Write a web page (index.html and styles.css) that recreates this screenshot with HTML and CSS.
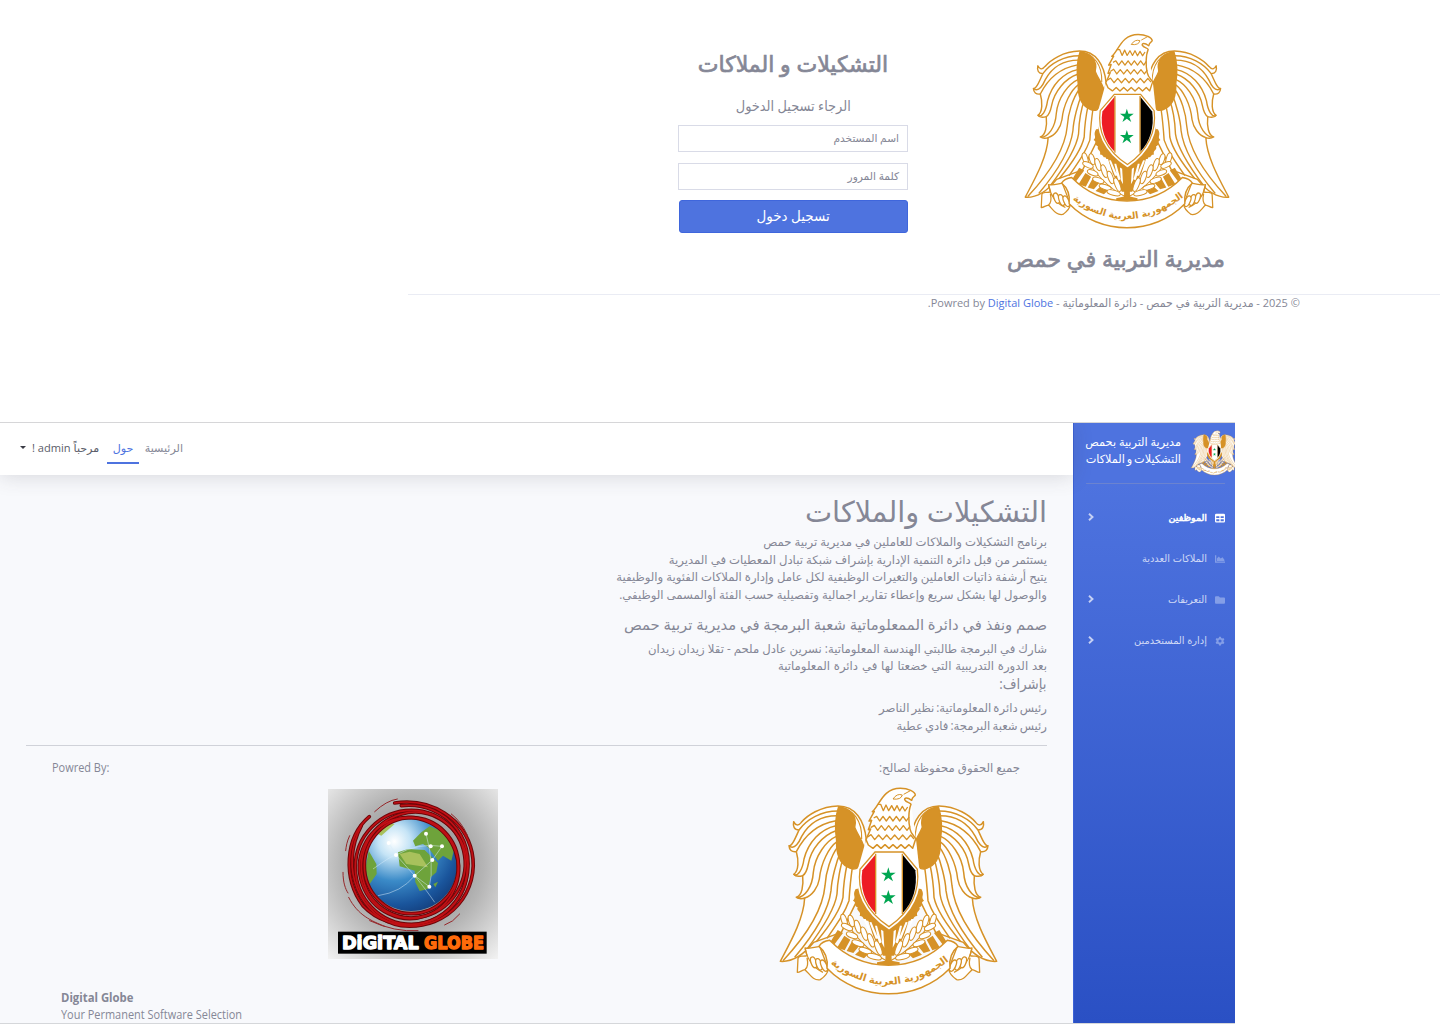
FILE: index.html
```html
<!DOCTYPE html>
<html lang="ar" dir="rtl">
<head>
<meta charset="utf-8">
<title>التشكيلات و الملاكات</title>
<link rel="stylesheet" href="styles.css">
</head>
<body>
<svg class="defs" width="0" height="0" aria-hidden="true">
  <defs>
    <g id="wing" stroke="#d69227" stroke-width="4.5" fill="none" stroke-linejoin="round">
      <path fill="#fff" d="M290 192C284 135 258 91 205 91C152 92 112 120 95 140C86 152 77 149 72 138C69 153 74 163 88 163C76 190 66 214 58 210C59 223 66 230 80 228C87 252 88 286 72 296C78 303 88 303 99 300C102 330 97 360 80 365C88 370 96 370 105 367C102 430 62 500 32 557C75 560 108 530 132 500L215 470L262 375L275 280Z"/>
      <path d="M205 106C155 106 112 130 88 163M202 120C155 120 118 142 96 182C88 200 76 222 60 212M199 135C142 145 104 180 80 228M199 150C152 160 116 200 103 250C98 285 85 300 74 298M199 165C160 178 124 220 116 265C112 285 108 295 99 300M200 182C170 195 136 240 131 290C128 335 105 365 82 366M202 198C178 215 154 260 149 310C145 335 128 360 105 367M205 212C184 240 168 290 166 330C160 400 110 480 40 555M213 228C200 258 186 310 184 345C176 410 130 480 75 545M222 243C212 270 203 320 202 355C196 400 150 470 110 523M233 262C227 290 221 330 220 365C212 405 180 450 140 498M248 275C243 310 240 345 238 375C226 410 205 440 172 488"/>
      <path fill="#d69227" d="M207 93C238 98 264 118 255 155C262 178 290 205 287 248C268 285 250 285 232 273C206 258 200 225 201 195C195 155 198 120 207 93Z"/>
      <path stroke-width="3.5" d="M210 94C250 100 278 135 276 190"/>
    </g>
    <g id="body" fill="#d69227">
      <path d="M258 340C246 360 262 362 250 375C262 380 251 391 264 395C258 406 276 407 270 421C285 420 278 438 296 435L310 480L340 540H358V330Z"/>
      <path d="M204 463L220 472L190 512L178 506ZM224 480L242 492L225 524L202 516ZM247 497L270 509L251 532L231 526ZM278 517L300 532L283 548L256 537Z"/>
      <path d="M281 430l7 0 22 50-8-3zM299 440l6-1 21 50-8 0zM316 450l6 0 14 50-8 4zM334 462l7 4 3 50-7-13z" fill="#fff"/>
    </g>
    <g id="wheat" fill="#fff" stroke="#d69227" stroke-width="3.2">
      <path fill="none" d="M226 430Q268 510 350 555"/>
      <ellipse cx="223" cy="433" rx="8" ry="18" transform="rotate(-18 223 433)"/>
      <ellipse cx="232" cy="454" rx="8" ry="18" transform="rotate(-65 232 454)"/>
      <ellipse cx="245" cy="436" rx="8" ry="18" transform="rotate(-18 245 436)"/>
      <ellipse cx="247" cy="479" rx="8" ry="18" transform="rotate(-68 247 479)"/>
      <ellipse cx="264" cy="453" rx="8" ry="20" transform="rotate(-18 264 453)"/>
      <ellipse cx="265" cy="503" rx="8" ry="19" transform="rotate(-70 265 503)"/>
      <ellipse cx="284" cy="474" rx="8" ry="21" transform="rotate(-20 284 474)"/>
      <ellipse cx="287" cy="525" rx="8" ry="20" transform="rotate(-72 287 525)"/>
      <ellipse cx="304" cy="494" rx="8" ry="21" transform="rotate(-20 304 494)"/>
      <ellipse cx="314" cy="543" rx="8" ry="22" transform="rotate(-75 314 543)"/>
      <ellipse cx="326" cy="517" rx="8" ry="23" transform="rotate(-22 326 517)"/>
    </g>
    <g id="scroll" fill="#fff" stroke="#d69227" stroke-width="4" stroke-linejoin="round">
      <path d="M150 512C130 515 126 520 106 517L112 540C100 545 88 536 85 548L83 590C92 590 96 583 106 582C120 595 130 616 152 612C165 603 174 595 176 580Z"/>
      <path d="M107 520C112 548 130 576 160 590M106 582C116 575 115 560 112 546" fill="none"/>
      <ellipse cx="132" cy="560" rx="8" ry="17" transform="rotate(-20 132 560)"/>
      <ellipse cx="148" cy="566" rx="8" ry="18" transform="rotate(-20 148 566)"/>
      <ellipse cx="163" cy="570" rx="8" ry="18" transform="rotate(-25 163 570)"/>
    </g>
    <symbol id="emblem" viewBox="28 34 657 627">
      <use href="#wing"/>
      <use href="#wing" transform="translate(713 0) scale(-1 1)"/>
      <path fill="#fff" d="M290 190L318 105L425 90L440 200L450 290L262 290Z"/>
      <g fill="none" stroke="#d69227" stroke-width="4.5" stroke-linejoin="round">
        <path fill="#fff" d="M289 192L303 160L296 162L306 134L298 136L314 107L308 108C330 90 338 38 392 38C416 38 436 48 437 58C434 64 428 62 426 74C412 64 404 66 405 72C410 82 422 80 424 86C416 105 416 140 421 160C424 178 438 183 438 190L429 218L418 207L406 218L394 207L382 218L370 207L358 218L346 207L334 218L322 207L310 218L296 208Z"/>
        <path d="M324 86L333 86L341 105L349 88L357 105L366 90L374 105L382 90L390 106L398 92L406 106L414 94M312 127L321 122L330 136L340 122L350 136L360 122L370 136L380 122L390 136L400 122L410 136L418 124M303 156L314 149L324 164L335 150L346 164L357 150L368 164L379 150L390 164L401 150L412 164L421 152M294 184L304 177L315 192L327 178L339 192L351 178L363 192L375 178L387 192L399 178L411 192L423 178L433 190" stroke-width="4"/>
        <path d="M370 70Q382 52 398 58Q394 73 370 70ZM402 56L424 44" stroke-width="3"/>
      </g>
      <use href="#body"/>
      <use href="#body" transform="translate(713 0) scale(-1 1)"/>
      <path fill="#d69227" d="M350 450H364L366 555L390 560V568H322V560L347 555Z"/>
      <use href="#wheat"/>
      <use href="#wheat" transform="translate(713 0) scale(-1 1)"/>
      <use href="#scroll"/>
      <use href="#scroll" transform="translate(713 0) scale(-1 1)"/>
      <path fill="#fff" stroke="#d69227" stroke-width="4.5" d="M180 494C165 496 154 502 148 512C164 525 176 545 172 578C270 680 443 680 541 578C537 545 549 525 565 512C559 502 548 496 533 494C435 594 278 594 180 494Z"/>
      <path id="motto-line" fill="none" d="M172 556Q356 702 548 548"/>
      <text class="motto" text-anchor="middle"><textPath href="#motto-line" startOffset="50%">الجمهورية العربية السورية</textPath></text>
      <path fill="#fff" stroke="#fff" stroke-width="14" d="M316 229H400L443 281C451 345 425 407 358 453C288 407 262 345 271 281Z"/>
      <path fill="#fff" stroke="#d69227" stroke-width="4" d="M316 229H400L443 281C451 345 425 407 358 453C288 407 262 345 271 281Z"/>
      <path fill="#ed1c24" d="M317 237L278 284C270 335 285 380 317 412Z"/>
      <path d="M399 237L437 284C444 335 430 380 399 412Z"/>
      <path fill="none" stroke="#d69227" stroke-width="4" d="M318 234V415M398 234V415"/>
      <path id="star" fill="#00a651" d="M356 275L361 291H378L364 301L370 317L356 307L342 317L348 301L334 291H351Z"/>
      <use href="#star" y="68"/>
    </symbol>
  </defs>
</svg>

<section class="login">
  <div class="login-form">
    <h2 class="login-title"><span>التشكيلات و الملاكات</span></h2>
    <p class="login-hint"><span>الرجاء تسجيل الدخول</span></p>
    <div class="field"><span>اسم المستخدم</span></div>
    <div class="field"><span>كلمة المرور</span></div>
    <button class="submit" type="button"><span>تسجيل دخول</span></button>
  </div>
  <div class="login-brand">
    <svg class="emblem-login"><use href="#emblem"/></svg>
    <h2><span>مديرية التربية في حمص</span></h2>
  </div>
</section>
<footer class="login-footer"><div class="copyright">© 2025 - مديرية التربية في حمص - دائرة المعلوماتية - Powred by <a>Digital Globe</a>.</div></footer>

<div class="app">
  <aside class="sidebar">
    <div class="brand">
      <svg class="emblem-small"><use href="#emblem"/></svg>
      <div class="brand-text"><div><span>مديرية التربية بحمص</span></div><div class="tight"><span>التشكيلات و الملاكات</span></div></div>
    </div>
    <hr class="divider">
    <nav class="menu">
      <div class="item active">
        <svg class="icon" viewBox="0 0 16 16"><path fill-rule="evenodd" d="M2 1H14Q16 1 16 3V13Q16 15 14 15H2Q0 15 0 13V3Q0 1 2 1ZM2 5V8H7V5ZM9 5V8H14V5ZM2 10V13H7V10ZM9 10V13H14V10Z"/></svg>
        <span>الموظفين</span><svg class="chev" viewBox="0 0 6 8"><path d="M1 .8L4.5 4L1 7.2"/></svg>
      </div>
      <div class="item">
        <svg class="icon" viewBox="0 0 16 16"><path d="M0 2H2V12H16V14H0ZM3 11V7L6 4L9 7L12 5L15 9V11Z"/></svg>
        <span>الملاكات العددية</span>
      </div>
      <div class="item">
        <svg class="icon" viewBox="0 0 16 16"><path d="M1.5 2H6L8 4H14.500Q16 4 16 5.500V12.500Q16 14 14.500 14H1.500Q0 14 0 12.500V3.500Q0 2 1.500 2Z"/></svg>
        <span>التعريفات</span><svg class="chev" viewBox="0 0 6 8"><path d="M1 .8L4.5 4L1 7.2"/></svg>
      </div>
      <div class="item">
        <svg class="icon" viewBox="0 0 16 16"><path fill-rule="evenodd" d="M6.500 1H9.500L10 3L11.500 3.800L13.500 3.200L15 5.800L13.500 7.200V8.800L15 10.200L13.500 12.800L11.500 12.200L10 13L9.500 15H6.500L6 13L4.500 12.200L2.500 12.800L1 10.200L2.500 8.800V7.200L1 5.800L2.500 3.200L4.500 3.800L6 3ZM8 5.500A2.500 2.500 0 1 0 8 10.500A2.500 2.500 0 1 0 8 5.500Z"/></svg>
        <span>إدارة المستخدمين</span><svg class="chev" viewBox="0 0 6 8"><path d="M1 .8L4.5 4L1 7.2"/></svg>
      </div>
    </nav>
  </aside>
  <div class="main">
    <header class="topbar">
      <a class="nav-home"><span>الرئيسية</span></a>
      <a class="nav-about"><span>حول</span></a>
      <a class="nav-user"><span>مرحباً admin !</span><i class="caret"></i></a>
    </header>
    <main class="content">
      <h1><span>التشكيلات والملاكات</span></h1>
      <p><span>برنامج التشكيلات والملاكات للعاملين في مديرية تربية حمص</span></p>
      <p><span>يستثمر من قبل دائرة التنمية الإدارية بإشراف شبكة تبادل المعطيات في المديرية</span></p>
      <p><span>يتيح أرشفة ذاتيات العاملين والتغيرات الوظيفية لكل عامل وإدارة الملاكات الفئوية والوظيفية</span></p>
      <p><span>والوصول لها بشكل سريع وإعطاء تقارير اجمالية وتفصيلية حسب الفئة أوالمسمى الوظيفي.</span></p>
      <h4 class="made"><span>صمم ونفذ في دائرة الممعلوماتية شعبة البرمجة في مديرية تربية حمص</span></h4>
      <p><span>شارك في البرمجة طالبتي الهندسة المعلوماتية: نسرين عادل ملحم - تقلا زيدان زيدان</span></p>
      <p class="loose"><span>بعد الدورة التدريبية التي خضعتا لها في دائرة المعلوماتية</span></p>
      <h4 class="supervised"><span>بإشراف:</span></h4>
      <p class="tight"><span>رئيس دائرة المعلوماتية: نظير الناصر</span></p>
      <p class="tight"><span>رئيس شعبة البرمجة: فادي عطية</span></p>
      <div class="credits">
        <div class="owner">
          <p><span>جميع الحقوق محفوظة لصالح:</span></p>
          <svg class="emblem-large"><use href="#emblem"/></svg>
        </div>
        <div class="vendor">
          <p><span>Powred By:</span></p>
          <svg class="globe" viewBox="0 0 510 510">
            <defs>
              <radialGradient id="paper" cx=".5" cy=".45" r=".75"><stop offset="0" stop-color="#777"/><stop offset=".55" stop-color="#b4b4b4"/><stop offset="1" stop-color="#f4f4f4"/></radialGradient>
              <radialGradient id="sea" cx=".32" cy=".25" r=".85"><stop offset="0" stop-color="#fff"/><stop offset=".2" stop-color="#c5e4f6"/><stop offset=".5" stop-color="#3b8bc8"/><stop offset=".8" stop-color="#1a559c"/><stop offset="1" stop-color="#123b78"/></radialGradient>
              <g id="rings">
                <ellipse cx="250" cy="230" rx="141" ry="144"/>
                <ellipse cx="243" cy="237" rx="148" ry="152" transform="rotate(-20 243 237)"/>
                <ellipse cx="256" cy="228" rx="154" ry="160" transform="rotate(30 256 228)"/>
                <ellipse cx="250" cy="235" rx="168" ry="171"/>
                <path d="M124 83C50 145 45 270 105 350C190 440 350 425 405 300C460 165 360 35 220 50"/>
                <path d="M100 110C30 240 100 390 220 410C370 425 455 300 432 190C410 90 310 25 200 42"/>
              </g>
            </defs>
            <rect width="510" height="510" fill="url(#paper)"/>
            <circle cx="249" cy="227" r="139" fill="url(#sea)"/>
            <path fill="#6ea33b" d="M210 190L240 180L290 183L330 222L325 250L308 265L300 300L275 306L262 280L260 245L215 232ZM122 185L145 225L146 255L125 285L112 240ZM255 155L280 130L305 112L350 130L380 175L370 215L345 200L330 215L300 175L285 165L262 172ZM316 285L330 278L322 295Z"/>
            <path fill="#a8c15c" d="M215 195L245 188L275 195L300 235L270 230L235 225ZM140 130L180 102L200 105L160 140Z"/>
            <g fill="none" stroke="#d8ecfa" stroke-width="2" opacity=".75"><path d="M182 162L204 198L260 260L304 293M204 198Q270 160 342 172M260 260L313 213L342 172M135 240Q190 200 204 198M150 320Q220 310 260 260M260 260Q300 310 320 340M304 293Q320 230 294 134"/></g>
            <g fill="#fff"><circle cx="182" cy="162" r="6"/><circle cx="204" cy="198" r="6"/><circle cx="260" cy="260" r="6"/><circle cx="304" cy="293" r="6"/><circle cx="313" cy="213" r="6"/><circle cx="342" cy="172" r="6"/><circle cx="308" cy="172" r="6"/><circle cx="294" cy="134" r="6"/></g>
            <g fill="none" stroke-linecap="round">
              <use href="#rings" stroke="#6e0508" stroke-width="11"/>
              <use href="#rings" stroke="#c01015" stroke-width="5"/>
              <path stroke="#96272a" stroke-width="3" d="M65 140C56 160 55 170 53 185M45 250C45 280 52 300 60 312M62 325C90 380 130 395 170 412M140 68Q175 35 208 30M370 75Q400 98 418 138M395 375Q375 400 350 408M125 395Q200 430 270 425"/>
            </g>
            <rect x="30" y="428" width="446" height="66"/>
            <text class="logo-white" x="42" y="480" textLength="230" lengthAdjust="spacingAndGlyphs">DiGiTAL</text>
            <text class="logo-orange" x="288" y="480" textLength="180" lengthAdjust="spacingAndGlyphs">GLOBE</text>
          </svg>
          <div class="vendor-text"><strong><span>Digital Globe</span></strong><div><span>Your Permanent Software Selection</span></div></div>
        </div>
      </div>
    </main>
  </div>
</div>
</body>
</html>
```
FILE: styles.css
```css
* { box-sizing: border-box; }
body { margin: 0; width: 1440px; height: 1024px; overflow: hidden; background: #fff; color: #858796; font: 11.7px/17.6px "Open Sans", "DejaVu Sans", sans-serif; }
h1, h2, h4, p { margin: 0; font-weight: 400; }
span { white-space: nowrap; display: inline-block; }
.tight { word-spacing: -1px; }
.loose { word-spacing: .8px; }
.defs { display: block; position: absolute; }
.motto { font: bold 30px "DejaVu Sans", sans-serif; fill: #d69227; }

/* Login page */
.login { direction: ltr; display: flex; height: 294px; margin-left: 678px; padding-top: 33px; }
.login-form { width: 230px; direction: rtl; }
.login-form h2, .login-brand h2 { -webkit-text-stroke: .7px #858796; }
.login-form h2 { text-align: center; font-size: 22px; line-height: 32px; padding-top: 14px; height: 62px; }
.login-hint { text-align: center; font-size: 14px; line-height: 22px; height: 30px; }
.login-hint span { transform: scaleX(.924); }
.field { height: 27px; border: 1px solid #d9dbe7; padding: 4px 8px; margin-bottom: 10.500px; font-size: 10.600px; }
.submit { display: block; width: 229px; height: 33px; border: 1px solid #3f66dc; border-radius: 3px; background: #4e73df; color: #fff; font: 14px/27px "Open Sans", "DejaVu Sans", sans-serif; padding: 0 0 2px; }
.submit span { transform: scaleX(.96); }
.login-brand { width: 218px; margin-left: 99px; direction: rtl; display: flex; flex-direction: column; align-items: center; }
.emblem-login { width: 206px; height: 197px; margin-right: -22px; }
.login-brand h2 { font-size: 22.300px; line-height: 32px; margin-top: 13px; }
.login-footer { width: 1032px; height: 128px; border-top: 1px solid #eaecf4; padding-right: 140px; }
.copyright { width: max-content; font-size: 11.200px; line-height: 16px; transform: scaleX(.982); transform-origin: right; }
.copyright a { color: #4e73df; }

/* Application window */
.app { width: 1235px; height: 602px; margin-right: 205px; display: flex; border-top: 1px solid #d6d6d8; border-bottom: 1px solid #d5d7da; background: #f8f9fc; overflow: hidden; }
.sidebar { width: 162px; background: linear-gradient(#4e73df 10%, #2a50c4); color: #fff; border-left: 1px solid #3c62d6; overflow: hidden; }
.brand { display: flex; height: 60px; margin-left: 11px; gap: 10px; }
.emblem-small { width: 47px; height: 46px; margin: 7px -3px 0 0; flex: none; }
.brand-text { padding-top: 10px; line-height: 17px; font-size: 11.250px; }
.divider { height: 1px; border: 0; margin: 0 10px 0 12px; background: #6b83d0; }
.menu { padding: 13px 10px 0 14px; }
.item { height: 41px; display: flex; align-items: center; font-size: 9.900px; color: #d0d9f6; }
.item.active { color: #fff; -webkit-text-stroke: .5px #fff; font-size: 9.500px; }
.icon { width: 10px; height: 10px; fill: #849ee7; margin-left: 8px; }
.active .icon { fill: #fff; }
.chev { width: 6px; height: 8px; margin: -2px auto 0 0; fill: none; stroke: #c6d1f4; stroke-width: 1.9; }
.main { width: 1073px; }
.topbar { height: 52px; background: #fff; display: flex; justify-content: flex-end; padding-left: 20px; box-shadow: 0 2px 20px rgba(58, 59, 69, .17); line-height: 49px; font-size: 11.100px; }
.nav-home { width: 44px; color: #858796; }
.nav-about { color: #4e73df; border-bottom: 2px solid #4e73df; width: 32px; height: 41px; text-align: center; }
.nav-user { display: flex; align-items: center; height: 49px; color: #5a5c69; width: 81px; margin-right: 6px; justify-content: flex-end; gap: 6px; }
.caret { border: 3.500px solid transparent; border-top-color: #3a3b45; border-bottom: 0; }
.content { padding: 16px 26px 0; }
.content h1 { font-size: 28.850px; line-height: 40px; height: 42px; }
.content h4 { font-size: 14.800px; line-height: 20px; height: 26px; }
.content .made { margin-top: 11px; height: 25.500px; }
.content .supervised { margin-top: -2px; }
.supervised span { transform: scaleX(.9); transform-origin: right; }
.credits { display: flex; margin-top: 11px; border-top: 1px solid #d0d2d9; padding-top: 13px; }
.owner, .vendor { width: 50%; }
.owner { padding-right: 27px; }
.emblem-large { width: 219px; height: 209px; margin: 10px 22px 0 0; display: block; }
.vendor { direction: ltr; padding-left: 26px; }
.vendor span { transform: scaleX(.937); transform-origin: left; }
.vendor strong span { transform: scaleX(.97); }
.globe { width: 170px; height: 170px; display: block; margin: 12px 0 0 276px; }
.logo-white, .logo-orange { font: 900 52px "DejaVu Sans", sans-serif; fill: #fff; stroke: #fff; stroke-width: 4; stroke-linejoin: round; }
.logo-orange { fill: #ff6b0a; stroke: #ff6b0a; }
.vendor-text { padding: 30px 0 0 9px; }
```
